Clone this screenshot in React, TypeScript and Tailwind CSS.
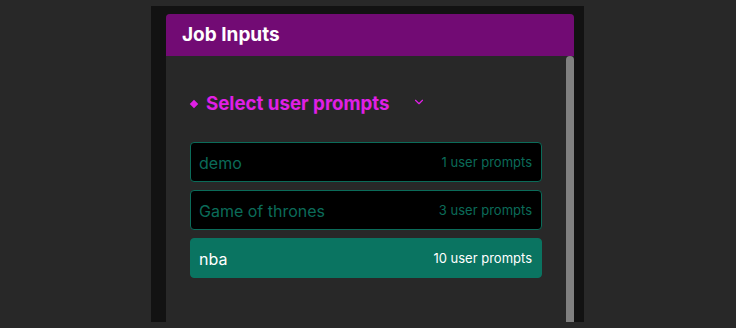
import { ChevronDown } from "lucide-react";

const prompts = [
  { name: "demo", count: 1 },
  { name: "Game of thrones", count: 3 },
  { name: "nba", count: 10 },
];

export default function App() {
  const selected = "nba";
  return (
    <div
      className="h-[328px] w-[736px] overflow-hidden bg-[#282828]"
      style={{ fontFamily: "Inter, 'Noto Sans', sans-serif" }}
    >
      <div className="ml-[151px] mt-[6px] flex h-[316px] w-[433px] bg-[#121212] pl-[15px] pr-[10px] pt-[8px]">
        <div className="flex w-[408px] flex-col overflow-hidden rounded-t-[4px] bg-[#282828]">
          <div className="flex h-[42px] shrink-0 items-center bg-[#720b74] px-4">
            <h2 className="text-[19px] font-bold text-white">Job Inputs</h2>
          </div>
          <div className="flex min-h-0 flex-1">
            <div className="flex-1 px-6 pt-[34px]">
              <div className="flex items-center text-[#e01fe6]">
                <span className="ml-[1px] mr-[9px] h-[6px] w-[6px] rotate-45 bg-[#e01fe6]" />
                <span className="text-[18.7px] font-bold leading-[28px]">Select user prompts</span>
                <ChevronDown className="ml-[22px] mb-[5px] h-[14px] w-[14px]" strokeWidth={2} />
              </div>
              <div className="mt-[24px] flex flex-col gap-2">
                {prompts.map((p) => {
                  const active = p.name === selected;
                  return (
                    <div
                      key={p.name}
                      className={
                        active
                          ? "flex h-[40px] items-center justify-between rounded-[4px] border border-[#0a7461] bg-[#0a7461] pl-2 pr-[9px] pt-[1px] text-white"
                          : "flex h-[40px] items-center justify-between rounded-[4px] border border-[#0b6b59] bg-black pl-2 pr-[9px] pt-[1px] text-[#0b6b59]"
                      }
                    >
                      <span className="text-[16px]">{p.name}</span>
                      <span className="text-[13px]">{p.count} user prompts</span>
                    </div>
                  );
                })}
              </div>
            </div>
            <div className="w-[8px] shrink-0 rounded-t-full bg-[#808080]" />
          </div>
        </div>
      </div>
    </div>
  );
}
